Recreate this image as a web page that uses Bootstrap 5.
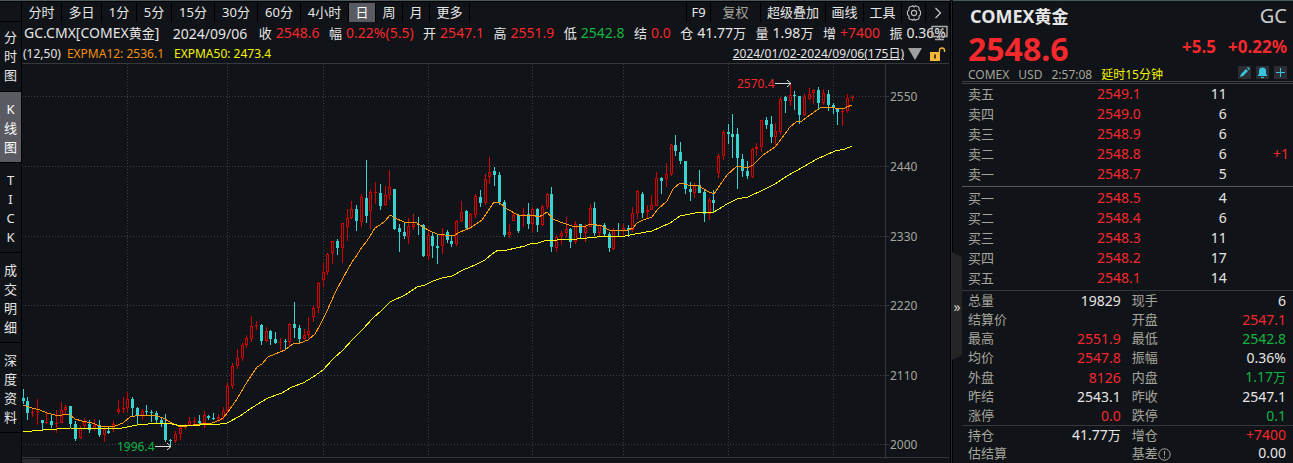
<!DOCTYPE html>
<html lang="zh-CN">
<head>
<meta charset="utf-8">
<meta name="viewport" content="width=device-width, initial-scale=1">
<title>COMEX黄金 GC</title>
<link href="https://cdn.jsdelivr.net/npm/bootstrap@5.3.0/dist/css/bootstrap.min.css" rel="stylesheet">
<style>
:root{--bg:#101317;--up:#f5282d;--down:#12b444;--ink:#e6e6e6;--mute:#a5a59d;--rule:#36383c}
body{background:var(--bg);color:var(--ink);font-family:"Noto Sans","Noto Sans CJK SC",sans-serif;font-size:13px;line-height:19px;overflow:hidden}
button{background:none;border:0;padding:0;color:inherit}
.up{color:var(--up)}.down{color:var(--down)}.mute{color:var(--mute)}
.fast{color:#f09010}.slow{color:#f4f400}
.topbar{height:22px;border-top:1px solid #4a5a5c;box-shadow:inset 0 1px #000}
.corner{width:22px;border-right:1px solid #000;border-bottom:1px solid #000}
.tab{border-right:1px solid #000;height:19px;margin-top:2px;white-space:nowrap;line-height:17px}
.tab.active{background:#5a5a62;color:#fff}
.w27{width:27px}.w34{width:35px}.w40{width:40px}.w43{width:43px}.w48{width:48px}
.w24{width:24px}.w50{width:50px}.w65{width:65px}.w38{width:38px}
.side{width:22px;border-right:1px solid #000}
.side button{width:21px;border-bottom:1px solid #000;padding:8px 3px 4px;display:flex;flex-direction:column;align-items:center}
.side button.short{height:70px;padding-top:6px}
.side button.mid{height:71px;background:#5a5a62;color:#fff}
.side button.tall{height:90px}
.side span{height:19px}
.infobar{height:22px;white-space:nowrap;padding-left:2px}
.infobar b{font-weight:400;font-size:14px;margin-left:4px}
.infobar .sym{font-size:14px}
.infobar .day{margin:0 2px 0 4px}
.infobar small{font-size:13px}
.monitor{position:absolute;right:2px;top:3px}
.rangebar{height:19px;padding:0 4px 0 1px;font-size:12px;white-space:nowrap}
.rangebar .fast{margin:0 10px 0 6px}
.rangebar a{color:var(--ink);font-size:12px}
.chart svg{display:block;width:100%;height:auto}
.chart text{font-size:12px}
.split{width:3px;background:#25282c;border-left:1px solid #000;border-right:1px solid #000;margin-top:1px}
.quote{width:340px;padding-left:9px;border-top:1px solid #4a5a5c;flex:none}
.handle{position:absolute;left:-1px;top:251px;width:10px;height:108px;background:#252525;clip-path:polygon(0 0,100% 5px,100% 103px,0 100%);font-size:14px;color:#ccc}
.headbox{height:80px;padding:0 6px}
.title{font-size:18px;font-weight:700;line-height:30px;padding-left:2px}
.title small{font-size:17px;font-weight:700}
.code{font-size:20px;line-height:30px;color:#ccc}
.last{font-size:32px;font-weight:700;line-height:34px}
.chg{font-size:17px;font-weight:700;line-height:30px;gap:12px}
.meta{font-size:12px;line-height:18px;gap:9px}
.tools{gap:5px}
.ic{width:13px;height:13px;background:#2b2d33;display:flex}
.q{width:100%;margin:0;border-collapse:collapse;table-layout:fixed}
.q th{font-weight:400;color:var(--mute);padding:0 0 0 6px}
.q td{font-size:14px;padding:0;text-align:right}
.q td small{font-size:13px}
.book tr{height:20px}
.book th{line-height:20px}.book td{line-height:20px}
.asks{border-top:3px double #3b3d41;padding-bottom:2px}
.bids{border-top:1px solid #55575b;padding:1px 0 2px}
.stats{border-top:1px solid var(--rule)}
.stats tr{height:19px}
.stats td{padding-right:7px}
.stats td:nth-child(2){padding-right:0}
.stats th:nth-child(3){padding-left:11px}
.stats.extra{line-height:18px}
.stats.extra tr{height:18px}
</style>
</head>
<body>
<div class="d-flex vh-100">
  <main class="flex-grow-1 d-flex flex-column overflow-hidden">
    <nav class="topbar d-flex" aria-label="周期">
      <div class="corner flex-shrink-0"></div>
      <button class="tab w40">分时</button><button class="tab w40">多日</button><button class="tab w34">1分</button><button class="tab w34">5分</button><button class="tab w43">15分</button><button class="tab w43">30分</button><button class="tab w43">60分</button><button class="tab w48">4小时</button><button class="tab w27 active">日</button><button class="tab w27">周</button><button class="tab w27">月</button><button class="tab w40">更多</button>
      <div class="tab flex-grow-1"></div>
      <button class="tab w24">F9</button><button class="tab w50 mute">复权</button><button class="tab w65">超级叠加</button><button class="tab w38">画线</button><button class="tab w38">工具</button>
      <button class="tab w24 d-flex align-items-center justify-content-center" aria-label="设置"><svg width="16" height="16" viewBox="0 0 16 16" fill="none" stroke="#bbb" stroke-width="1.1"><path d="M5.500 1.500 6.700.8 8 2l1.300-1.200 1.200.7 1.800.2.900 1.700-.3 1.500 1.600 1.300v3.600l-1.600 1.300.3 1.500-.9 1.700-1.800.2-1.200.7L8 14l-1.300 1.200-1.200-.7-1.800-.2-.9-1.700.3-1.500L1.500 9.800V6.200l1.600-1.300-.3-1.500.9-1.700z"/><circle cx="8" cy="8" r="2.600"/></svg></button>
      <button class="tab w24 d-flex align-items-center justify-content-center" aria-label="展开"><svg width="8" height="12" viewBox="0 0 8 12" fill="none" stroke="#ccc" stroke-width="1.200"><path d="M1.500 1 6.500 6 1.500 11"/></svg></button>
    </nav>
    <div class="d-flex flex-grow-1">
      <nav class="side flex-shrink-0" aria-label="视图">
        <button class="short"><span>分</span><span>时</span><span>图</span></button>
        <button class="mid"><span>K</span><span>线</span><span>图</span></button>
        <button class="tall"><span>T</span><span>I</span><span>C</span><span>K</span></button>
        <button class="tall"><span>成</span><span>交</span><span>明</span><span>细</span></button>
        <button class="tall"><span>深</span><span>度</span><span>资</span><span>料</span></button>
      </nav>
      <section class="flex-grow-1 overflow-hidden">
        <div class="infobar position-relative d-flex align-items-center justify-content-between pe-1">
          <span class="sym">GC.CMX[COMEX<small>黄金</small>]</span>
          <span class="sym day">2024/09/06</span>
          <span>收<b class="up">2548.6</b></span>
          <span>幅<b class="up">0.22%(5.5)</b></span>
          <span>开<b class="up">2547.1</b></span>
          <span>高<b class="up">2551.9</b></span>
          <span>低<b class="down">2542.8</b></span>
          <span>结<b class="up">0.0</b></span>
          <span>仓<b>41.77</b>万</span>
          <span>量<b>1.98</b>万</span>
          <span>增<b class="up">+7400</b></span>
          <span>振<b>0.36%</b></span>
          <svg class="monitor" width="17" height="16" viewBox="0 0 17 16" fill="none" stroke="#aaa"><path d="M1 1.500h15v10H1zM4 14.500h9M8.500 12v2" stroke-width="1.400"/><path d="M4 4.500h9M4 6.500h9M4 8.500h9" opacity=".6"/></svg>
        </div>
        <div class="rangebar d-flex align-items-center">
          <span>(12,50)</span>
          <span class="fast">EXPMA12: 2536.1</span>
          <span class="slow">EXPMA50: 2473.4</span>
          <a href="#" class="ms-auto">2024/01/02-2024/09/06(175日)</a>
          <svg class="ms-1 me-2" width="14" height="12"><path d="M0 0h14L7 12z" fill="#a0a0a0"/></svg>
          <svg width="16" height="14" viewBox="0 0 16 14"><path d="M9.500 5V3.500a2.500 2.500 0 0 1 5 0V5" fill="none" stroke="#f4b83a" stroke-width="1.300"/><path d="M0 5h10v9H0z" fill="#f4b83a"/><path d="M4 7.500h2v4H4z" fill="#503800"/></svg>
        </div>
        <div class="chart"><svg id="kline" viewBox="22 63 928 400" role="img" aria-label="日K线图"></svg></div>
      </section>
    </div>
  </main>
  <div class="split flex-shrink-0"></div>
  <aside class="quote position-relative">
    <button class="handle" aria-label="收起">»</button>
    <header class="headbox">
      <div class="d-flex justify-content-between"><span class="title">COMEX<small>黄金</small></span><span class="code">GC</span></div>
      <div class="d-flex justify-content-between up"><span class="last">2548.6</span><span class="chg d-flex"><span>+5.5</span><span>+0.22%</span></span></div>
      <div class="meta d-flex mute">
        <span>COMEX</span><span>USD</span><span>2:57:08</span><span class="slow">延时15分钟</span>
        <div class="tools d-flex ms-auto">
        <button class="ic" aria-label="编辑"><svg width="13" height="13"><path d="M2 11l1-3 5-5 2 2-5 5zM9 2l1-1 2 2-1 1z" fill="#38c4dc"/></svg></button>
        <button class="ic" aria-label="提醒"><svg width="13" height="13"><path d="M2 10V9l1-1V5a3.500 3.500 0 0 1 7 0v3l1 1v1zM5 11h3v1H5z" fill="#38c4dc"/></svg></button>
        <button class="ic" aria-label="添加"><svg width="13" height="13"><path d="M6 2h1v4h4v1H7v4H6V7H2V6h4z" fill="#38c4dc"/></svg></button>
        </div>
      </div>
    </header>
    <div class="asks"><table class="q book"><colgroup><col style="width:30%"><col style="width:24%"><col style="width:26%"><col></colgroup><tbody id="asks"></tbody></table></div>
    <div class="bids"><table class="q book"><colgroup><col style="width:30%"><col style="width:24%"><col style="width:26%"><col></colgroup><tbody id="bids"></tbody></table></div>
    <div class="stats"><table class="q"><colgroup><col style="width:20%"><col style="width:28%"><col style="width:24%"><col></colgroup><tbody>
      <tr><th>总量</th><td>19829</td><th>现手</th><td>6</td></tr>
      <tr><th>结算价</th><td></td><th>开盘</th><td class="up">2547.1</td></tr>
      <tr><th>最高</th><td class="up">2551.9</td><th>最低</th><td class="down">2542.8</td></tr>
      <tr><th>均价</th><td class="up">2547.8</td><th>振幅</th><td>0.36%</td></tr>
      <tr><th>外盘</th><td class="up">8126</td><th>内盘</th><td class="down">1.17<small>万</small></td></tr>
      <tr><th>昨结</th><td>2543.1</td><th>昨收</th><td>2547.1</td></tr>
      <tr><th>涨停</th><td class="up">0.0</td><th>跌停</th><td class="down">0.1</td></tr>
    </tbody></table></div>
    <div class="stats extra"><table class="q"><colgroup><col style="width:20%"><col style="width:28%"><col style="width:24%"><col></colgroup><tbody>
      <tr><th>持仓</th><td>41.77<small>万</small></td><th>增仓</th><td class="up">+7400</td></tr>
      <tr><th>估结算</th><td></td><th>基差<svg width="13" height="13" viewBox="0 0 13 13" fill="none" stroke="#a5a59d"><circle cx="6.500" cy="6.500" r="5.700"/><path d="M6.500 3v4.500M6.500 8.800v1.400"/></svg></th><td>0.00</td></tr>
    </tbody></table></div>
  </aside>
</div>
<script src="https://cdn.jsdelivr.net/npm/bootstrap@5.3.0/dist/js/bootstrap.bundle.min.js"></script>
<script>
const row = ([n, p, q, d]) => `<tr><th>${n}</th><td class="up">${p}</td><td>${q}</td><td class="up pe-1">${d || ''}</td></tr>`;
document.getElementById('asks').innerHTML = [['卖五','2549.1',11],['卖四','2549.0',6],['卖三','2548.9',6],['卖二','2548.8',6,'+1'],['卖一','2548.7',5]].map(row).join('');
document.getElementById('bids').innerHTML = [['买一','2548.5',4],['买二','2548.4',6],['买三','2548.3',11],['买四','2548.2',17],['买五','2548.1',14]].map(row).join('');

// One candle per trading day: high, body top, body bottom, low, direction (g falls, r rises)
const candles = `389,398,401,404g 397,401,413,420g 408,412,412,417r 399,411,411,425r 420,420,423,430g 413,422,422,424r 414,421,425,428g 410,423,423,433r 402,410,423,423r 405,407,410,414r
406,406,424,428g 421,424,439,441g 426,428,438,439r 418,422,426,430r 420,424,430,433g 419,425,429,431r 420,425,435,437g 426,429,435,442r 426,431,433,434g 421,424,429,432r
400,409,412,414r 397,408,408,413r 392,399,408,412r 397,399,408,416g 407,408,416,425g 409,411,416,420r 405,411,411,415g 410,412,412,422g 411,413,420,423g 418,420,423,427g
414,423,440,442g 439,440,440,447g 431,434,441,443r 425,428,434,440r 424,426,427,429r 417,421,425,426r 417,421,421,425r 415,421,423,425g 411,415,423,428r 415,416,418,420g
413,418,418,420g 414,417,419,422r 407,411,417,420r 383,386,411,413r 363,366,386,389r 349,358,366,369r 343,345,358,361r 335,338,345,348r 316,326,339,342r 321,325,325,330r
324,325,341,345g 327,331,341,342r 330,331,339,345g 332,339,343,344g 338,342,342,350r 339,341,341,349g 323,324,342,346r 302,324,328,338g 325,328,339,344g 329,335,339,340r
317,331,335,338r 306,308,317,322r 282,283,308,313r 263,272,280,287r 253,254,272,275r 241,241,253,264r 239,241,248,255g 223,223,248,263r 209,218,227,241r 201,209,218,219r
205,209,221,231g 194,197,222,227r 160,198,216,223g 189,192,211,229r 182,192,192,204r 184,193,206,210g 186,195,205,206r 170,187,195,200r 189,189,229,230g 224,228,232,252g
222,232,236,239g 218,226,237,244r 214,224,227,230r 217,224,224,235g 224,225,256,257g 229,235,256,260r 233,236,246,258g 234,246,248,264g 228,235,246,254r 230,232,240,243g
236,241,244,247g 220,221,244,246r 201,212,221,222r 210,211,228,230g 213,214,228,229r 194,196,215,218r 190,197,203,207g 174,179,203,205r 157,172,177,184r 167,171,175,186g
172,175,202,205g 200,202,235,237g 224,232,235,238r 212,215,221,221r 214,215,231,233g 208,214,214,227r 203,214,224,229g 207,209,224,232r 208,209,225,232g 205,207,225,226r
193,194,207,209r 187,194,247,252g 235,237,248,252r 231,233,236,245r 217,229,233,237r 228,229,242,248g 221,224,242,244r 224,224,233,238g 224,227,233,242r 204,208,227,227r
202,208,233,236g 224,225,233,237r 223,225,234,236g 232,234,248,252g 228,230,249,250r 223,230,230,237g 224,228,231,237r 225,228,230,237g 207,213,230,232r 190,191,213,219r
192,194,213,218g 205,210,212,219r 195,205,210,210r 172,178,206,206r 177,178,181,194g 163,174,179,187r 144,145,174,176r 135,145,151,156g 142,152,161,164g 161,161,189,194g
182,189,192,201g 183,185,193,198r 170,185,193,193g 190,192,214,222g 198,200,214,220r 190,200,203,213g 154,156,173,178r 130,132,156,160r 124,132,134,144g 114,134,137,158g
128,134,158,189g 154,159,171,177g 161,171,176,179g 148,149,177,178r 143,147,149,156r 120,120,147,152r 117,120,125,129g 116,124,137,143g 123,131,137,146r 97,99,132,135r
96,97,101,113g 83,95,101,106r 91,95,96,110g 96,96,115,124g 94,97,115,116r 88,94,99,100r 89,90,93,104r 87,90,103,110g 89,93,103,105r 90,94,105,111g
103,105,108,114g 108,109,112,125g 108,111,111,126r 94,98,111,113r 95,97,97,101r`.split(/\s+/);
const ema12 = '23,405 32,408 40,410 47,413 55,415 62,415 66,414 70,415 75,419 82,421 92,423 100,426 110,427 115,426 123,423 130,417 135,416 148,415 157,416 163,418 170,422 178,426 187,426 200,424 212,423 220,420 223,418 228,412 237,399 247,382 257,367 262,364 268,357 275,354 285,350 290,346 295,343 300,343 308,340 315,334 320,325 327,311 335,293 343,278 352,262 357,255 362,247 367,241 375,228 380,225 385,221 390,215 395,218 404,222 417,223 423,227 430,231 437,234 445,235 453,236 460,232 470,228 482,220 494,202 499,202 507,209 518,215 528,216 533,215 538,217 543,215 547,212 553,219 560,222 572,226 583,227 591,224 602,226 609,230 628,230 633,228 637,223 643,220 652,217 658,209 667,201 673,189 680,183 688,185 699,186 707,191 714,194 720,185 727,175 737,166 747,168 753,165 763,155 775,147 782,138 790,127 796,122 802,121 810,115 817,110 822,107 830,107 835,108 843,109 847,107 852,105';
const ema50 = '23,432 32,431 43,430 57,429 70,428 117,429 127,427 137,425 148,424 157,423 167,423 177,425 200,425 220,424 227,423 240,416 253,407 268,398 282,393 292,387 303,383 313,377 323,370 333,359 343,350 352,340 363,329 372,319 382,310 390,302 405,295 417,287 425,285 433,281 442,278 452,276 463,270 475,265 485,260 492,254 498,250 507,250 525,246 532,243 538,243 547,240 557,240 577,239 597,237 625,236 635,234 652,231 670,223 680,216 700,212 714,212 727,204 737,199 748,197 763,190 775,184 787,176 803,167 817,159 835,151 845,149 852,146';
const rect = (x, y, w, h, c) => `<rect x="${x}" y="${y}" width="${w}" height="${h}" fill="${c}"/>`;
let out = '<g shape-rendering="crispEdges">';
const levels = [[96,2550],[166,2440],[236,2330],[305,2220],[375,2110],[444,2000]];
for (const [y] of levels) out += `<path d="M22 ${y + .5}H885" stroke="#3c3f44" stroke-dasharray="1 2"/>` + rect(885, y, 4, 1, '#36383c');
for (const x of [127,227,323,428,532,623,728,833]) out += `<path d="M${x + .5} 64V457" stroke="#3c3f44" stroke-dasharray="1 2"/>`;
out += rect(22, 63, 927, 1, '#36383c') + rect(22, 457, 927, 1, '#36383c') + rect(885, 63, 1, 395, '#36383c') + rect(22, 459, 18, 4, '#2a2a30');
candles.forEach((s, i) => {
  const [h, t, b, l] = s.slice(0, -1).split(',').map(Number), x = Math.floor(23 + 4.765 * i);
  const bh = Math.max(1, b - t), up = s.endsWith('r'), c = up ? '#d40000' : '#3ad2ce';
  out += rect(x, h, 1, l - h, c) + rect(x - 1, t, 3, bh, c);
  if (up && bh > 2) out += rect(x, t + 1, 1, bh - 2, '#101317');
});
out += `<polyline points="${ema12}" fill="none" stroke="#ff9a0a"/><polyline points="${ema50}" fill="none" stroke="#ffff14"/></g>`;
for (const [y, p] of levels) out += `<text x="890" y="${y + 5}" fill="#a5a59d">${p}</text>`;
out += `<text x="737" y="88" fill="#f5282d">2570.4</text><text x="117" y="451" fill="#12b444">1996.4</text>
<path d="M775 83.500H791M787 80l4 3.500-4 3.500M155 446.500H171M167 443l4 3.500-4 3.500" fill="none" stroke="#ddd"/>`;
document.getElementById('kline').innerHTML = out;
</script>
</body>
</html>
